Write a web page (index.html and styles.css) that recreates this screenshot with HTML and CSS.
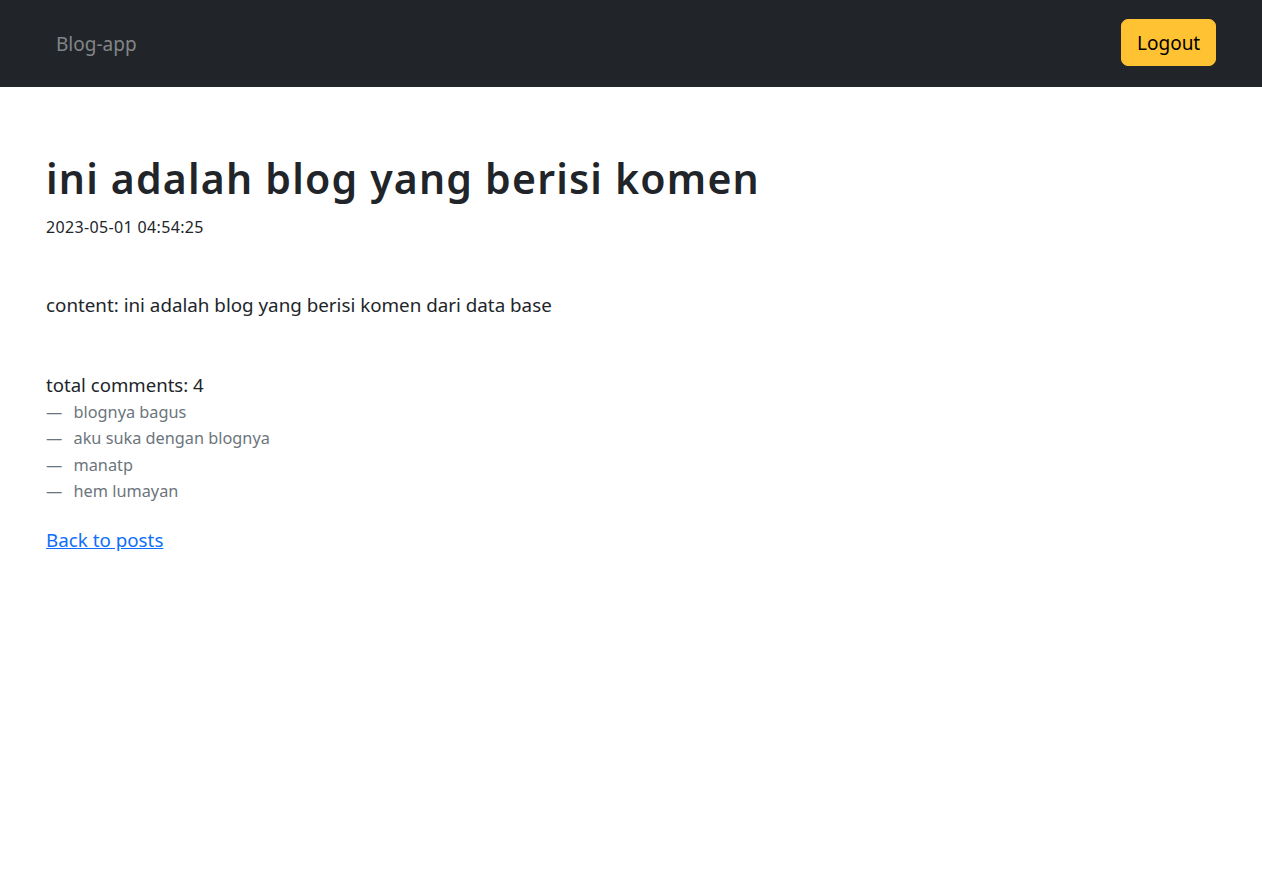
FILE: index.html
```html
<!DOCTYPE html>
<html lang="id">
<head>
<meta charset="utf-8">
<title>Blog-app</title>
<link rel="stylesheet" href="styles.css">
</head>
<body>
<nav class="navbar">
  <a class="brand" href="#">Blog-app</a>
  <button class="btn-logout" type="button">Logout</button>
</nav>
<main class="post">
  <h1 class="post-title">ini adalah blog yang berisi komen</h1>
  <div class="post-date">2023-05-01 04:54:25</div>
  <p class="post-content">content: ini adalah blog yang berisi komen dari data base</p>
  <div class="comments">
    <div class="comments-total">total comments: 4</div>
    <ul class="comment-list">
      <li class="comment">blognya bagus</li>
      <li class="comment">aku suka dengan blognya</li>
      <li class="comment">manatp</li>
      <li class="comment">hem lumayan</li>
    </ul>
  </div>
  <a class="back-link" href="#">Back to posts</a>
</main>
</body>
</html>
```
FILE: styles.css
```css
* { box-sizing: border-box; }
html, body { margin: 0; padding: 0; }
body {
  font-family: "Noto Sans", "Open Sans", sans-serif;
  color: #212529;
  background: #fff;
  font-size: 16px;
  line-height: 1.5;
}
.navbar {
  height: 87px;
  background: #212529;
  display: flex;
  align-items: center;
  justify-content: space-between;
  padding: 0 46px 0 56px;
}
.brand {
  color: rgba(255,255,255,.45);
  font-size: 19px;
  text-decoration: none;
  line-height: 30px;
}
.btn-logout {
  font-family: inherit;
  background: #ffc233;
  border: 1px solid #ffc233;
  border-radius: 7px;
  color: #000;
  font-size: 19px;
  line-height: 30px;
  padding: 7px 15px;
  width: 95px;
  height: 47px;
  margin-top: -2px;
}
.post {
  padding: 0 46px;
}
.post-title {
  margin: 67px 0 0;
  font-size: 41px;
  font-weight: 600;
  line-height: 48px;
  letter-spacing: 1.2px;
}
.post-date {
  margin-top: 13px;
  font-size: 16px;
  line-height: 24px;
  letter-spacing: 0.35px;
}
.post-content {
  margin: 51px 0 0;
  font-size: 18.8px;
  line-height: 30px;
}
.comments { margin-top: 50px; }
.comments-total {
  font-size: 18.6px;
  line-height: 30px;
}
.comment-list {
  list-style: none;
  margin: -1px 0 0;
  padding: 0;
}
.comment {
  color: #6c757d;
  font-size: 16.3px;
  line-height: 26.25px;
}
.comment::before {
  content: "\2014\00A0";
  margin-right: 7px;
}
.back-link {
  display: inline-block;
  margin-top: 21px;
  color: #0d6efd;
  font-size: 18.8px;
  line-height: 30px;
}
```
